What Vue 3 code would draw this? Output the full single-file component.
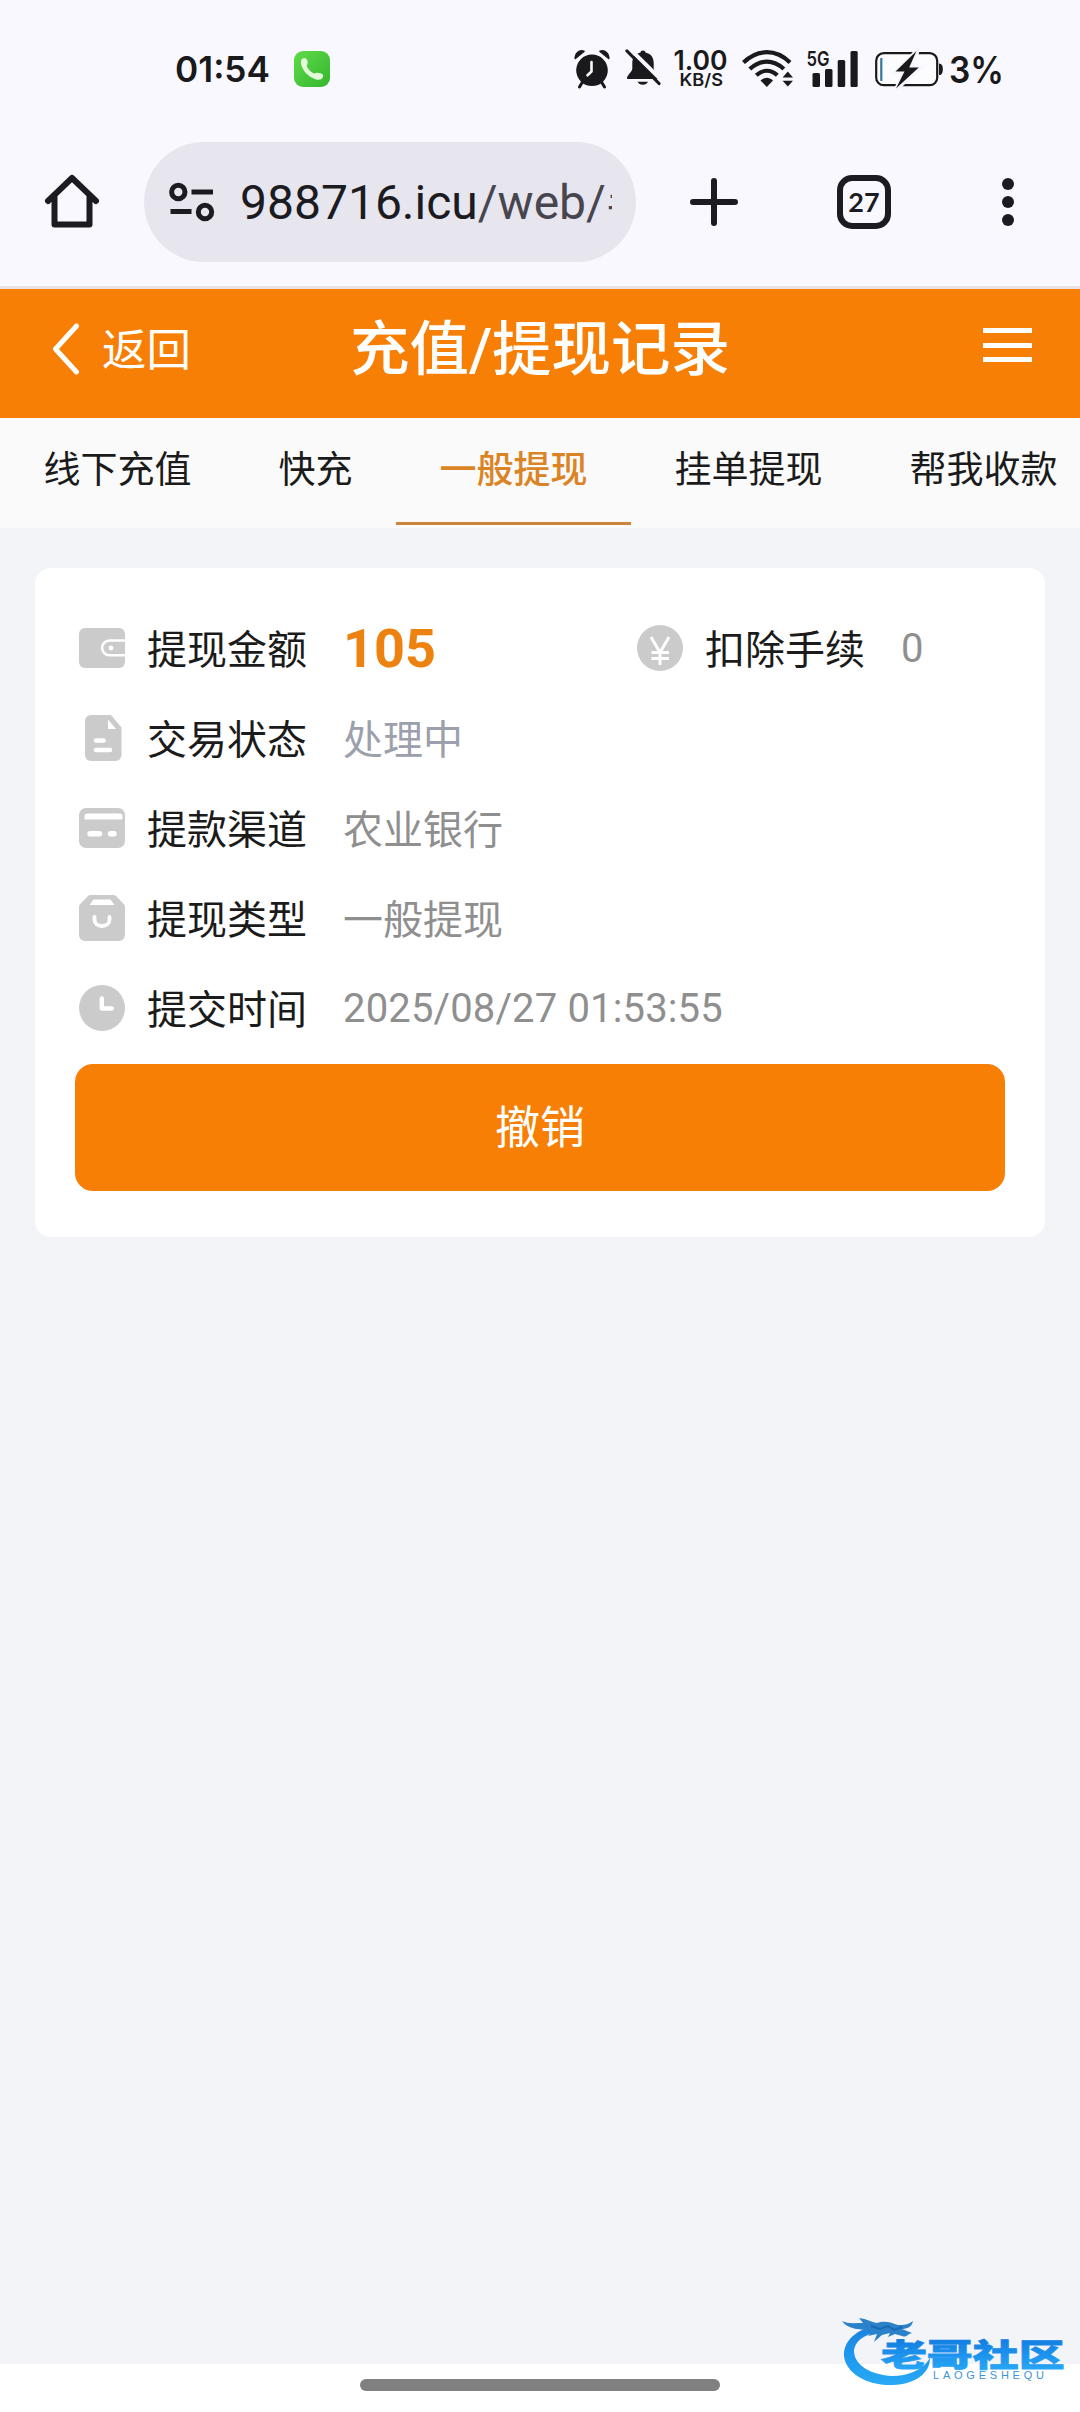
<script setup>
import { ref } from "vue";

const tabs = ["线下充值", "快充", "一般提现", "挂单提现", "帮我收款"];
const activeTab = ref(2);

const amount = { label: "提现金额", value: "105" };
const fee = { label: "扣除手续", value: "0" };

const rows = [
  { icon: "doc", label: "交易状态", value: "处理中", pending: true },
  { icon: "card", label: "提款渠道", value: "农业银行" },
  { icon: "bag", label: "提现类型", value: "一般提现" },
  { icon: "clock", label: "提交时间", value: "2025/08/27 01:53:55" },
];
</script>

<template>
  <div class="screen">
    <div class="status-bar">
      <svg class="status-time" width="96" height="56" viewBox="0 -8 96 56">
        <text x="0" y="33" textLength="95" lengthAdjust="spacingAndGlyphs">01:54</text>
      </svg>
      <svg class="status-call" width="36" height="36" viewBox="0 0 36 36">
        <defs>
          <linearGradient id="callBg" x1="0" y1="0" x2="1" y2="1">
            <stop offset="0" stop-color="#5fdc4a" />
            <stop offset="1" stop-color="#35b52f" />
          </linearGradient>
        </defs>
        <rect width="36" height="36" rx="9" fill="url(#callBg)" />
        <path d="M8 8c1.300-1.300 3.500-1.300 4.600.3 1.200 1.800 1.500 3.500.6 5.200-.4.800-.6 1.400-.2 2.200 1.400 2.900 3.600 5 6.500 6.500.8.400 1.500.1 2.300-.2 2.500-.7 5 .2 7 1.600.6.500.4 2.600-.8 4-1.300 1.300-3.800 1.400-6 .8C14.500 26 8.600 20.300 7 12.800 6.700 11 6.900 9.200 8 8z" fill="#e3fbd9" />
      </svg>

      <div class="status-icons">
        <svg width="38" height="40" viewBox="0 0 38 40">
          <path d="M2.300 9.500C1.500 5 6 .3 11 2.300z" fill="#1a1a1c" stroke="#1a1a1c" stroke-width="1.500" stroke-linejoin="round" />
          <path d="M35.700 9.500C36.500 5 32 .3 27 2.300z" fill="#1a1a1c" stroke="#1a1a1c" stroke-width="1.500" stroke-linejoin="round" />
          <circle cx="19" cy="21.300" r="15.800" fill="#1a1a1c" />
          <path d="M9.500 33l-3 5M28.500 33l3 5" stroke="#1a1a1c" stroke-width="3" stroke-linecap="round" />
          <path d="M18.500 13v9.500l-4 3.800" fill="none" stroke="#f8f7fe" stroke-width="2.600" stroke-linecap="round" stroke-linejoin="round" />
        </svg>
        <svg class="bell" width="36" height="40" viewBox="0 0 36 40">
          <path d="M18 1.600c-1.400 0-2.400.8-2.500 2C9.500 5 7.500 9 7.300 14v5.500c0 3-4.600 6.200-5.300 9.200-.2.900.3 1.300 1.200 1.300h29.600c.9 0 1.400-.4 1.200-1.300-.7-3-5.300-6.200-5.300-9.200V14C28.500 9 26.500 5 20.500 3.600c-.1-1.200-1.100-2-2.500-2z" fill="#1a1a1c" />
          <path d="M12.500 32.800h10.500c-1 2-2.800 3-5.200 3s-4.300-1-5.300-3z" fill="#1a1a1c" />
          <path d="M4.500-.5L36.500 31" stroke="#f8f7fe" stroke-width="4" />
          <path d="M2 2l32 32.500" stroke="#1a1a1c" stroke-width="3.200" stroke-linecap="round" />
        </svg>
        <svg class="speed" width="56" height="56" viewBox="0 -8 56 56">
          <text x="0.500" y="21" font-size="26.500" textLength="54" lengthAdjust="spacingAndGlyphs">1.00</text>
          <text x="6.500" y="37" font-size="17" textLength="43.500" lengthAdjust="spacingAndGlyphs">KB/S</text>
        </svg>
        <svg class="wifi" width="52" height="40" viewBox="0 0 52 40">
          <g fill="none" stroke="#1a1a1c" stroke-width="4.200">
            <path d="M1.500 13.500C15.500-.3 34-.3 48 13.500" />
            <path d="M7.800 20c10.500-9.800 23.600-9.800 34 0" />
            <path d="M14.300 26.300c6.500-6 14.500-6 21 0" />
          </g>
          <path d="M18.500 31.500c4-3.600 8.500-3.600 12.500 0L24.800 38z" fill="#1a1a1c" />
          <path d="M45.800 22.600l5.200 5.900H40.600zM45.800 37.600l5.200-5.900H40.600z" fill="#1a1a1c" />
        </svg>
        <svg class="signal" width="52" height="56" viewBox="0 -8 52 56">
          <text x="0.500" y="17" font-size="20.500" textLength="23" lengthAdjust="spacingAndGlyphs">5G</text>
          <rect x="6.500" y="24" width="7.500" height="14" rx="1.500" fill="#1a1a1c" />
          <rect x="19" y="20" width="7.500" height="18" rx="1.500" fill="#1a1a1c" />
          <rect x="31.700" y="11" width="7.500" height="27" rx="1.500" fill="#1a1a1c" />
          <rect x="44.500" y="2" width="7.200" height="36" rx="1.500" fill="#1a1a1c" />
        </svg>
        <svg class="battery" width="68" height="40" viewBox="0 0 68 40">
          <rect x="1.200" y="4.200" width="61" height="32" rx="7.500" fill="#fcfcff" stroke="#1a1a1c" stroke-width="2.200" />
          <path d="M8 8.500c-1.800.3-3 1.800-3 4v15.500c0 2.200 1.200 3.700 3 4z" fill="#a9dcee" />
          <path d="M6.200 9v23" stroke="#3b6f94" stroke-width="1.800" />
          <path d="M64 14.500c2.700.3 3.800 1.800 3.800 5.700s-1.100 5.600-3.800 5.900z" fill="#1a1a1c" />
          <path d="M42 2.500L20.500 23h9.500l-8 16L44.500 18.600h-9.300z" fill="#1a1a1c" stroke="#f8f7fe" stroke-width="5" />
          <path d="M41.500 2L20.500 22.500h9l-8.500 17L43.800 18.500h-9.600z" fill="#1a1a1c" />
        </svg>
        <svg class="percent" width="56" height="56" viewBox="0 -8 56 56">
          <text x="0" y="33.500" font-size="36.500" textLength="55" lengthAdjust="spacingAndGlyphs">3%</text>
        </svg>
      </div>
    </div>

    <div class="browser-bar">
      <svg class="home-icon" width="56" height="56" viewBox="0 0 56 56">
        <path d="M4 27L28 4l24 23M10.500 22v28.500h35V22" fill="none" stroke="#1b1b21" stroke-width="6" stroke-linecap="round" stroke-linejoin="round" />
      </svg>
      <div class="url-pill">
        <svg width="46" height="40" viewBox="0 0 46 40">
          <g fill="none" stroke="#1b1b21" stroke-width="5">
            <circle cx="9.300" cy="10" r="6.700" />
            <circle cx="36" cy="30" r="6.700" />
            <path d="M22.500 10H44M1.500 29.500H22.500" />
          </g>
        </svg>
        <div class="url"><span class="domain">988716.icu</span>/web/<span class="url-cut">#</span></div>
      </div>
      <svg class="plus-icon" width="48" height="48" viewBox="0 0 48 48">
        <path d="M24 3v42M3 24h42" stroke="#1b1b21" stroke-width="6" stroke-linecap="round" />
      </svg>
      <div class="tab-count">27</div>
      <svg class="dots-icon" width="12" height="48" viewBox="0 0 12 48">
        <circle cx="6" cy="6" r="6" fill="#1b1b21" />
        <circle cx="6" cy="24" r="6" fill="#1b1b21" />
        <circle cx="6" cy="42" r="6" fill="#1b1b21" />
      </svg>
    </div>

    <header class="page-header">
      <div class="back">
        <svg width="28" height="52" viewBox="0 0 28 52">
          <path d="M24.500 3L3.500 26l21 23" fill="none" stroke="#fff" stroke-width="5" stroke-linecap="round" stroke-linejoin="round" />
        </svg>
        <span>返回</span>
      </div>
      <h1>充值/提现记录</h1>
      <div class="menu"><i></i><i></i><i></i></div>
    </header>

    <nav class="tabs">
      <div
        v-for="(tab, index) in tabs"
        :key="tab"
        class="tab"
        :class="{ active: index === activeTab }"
        @click="activeTab = index"
      >
        {{ tab }}
      </div>
    </nav>

    <main class="content">
      <section class="card">
        <div class="row">
          <div class="cell cell-amount">
            <svg class="icon" viewBox="0 0 46 46">
              <rect y="3" width="46" height="40" rx="6" fill="#cbcbcb" />
              <path d="M46 15.500H30.500a7.300 7.300 0 0 0 0 14.800H46" fill="none" stroke="#fff" stroke-width="2.600" />
              <circle cx="32" cy="23" r="2.400" fill="#fff" />
            </svg>
            <span class="label">{{ amount.label }}</span>
            <span class="value amount">{{ amount.value }}</span>
          </div>
          <div class="cell">
            <svg class="icon" viewBox="0 0 46 46">
              <circle cx="23" cy="23" r="23" fill="#cbcbcb" />
              <path d="M14 12l9 15.500L32 12M23 27v13M14.500 27.500h17.500M14.500 33.500h17.500" fill="none" stroke="#fff" stroke-width="3" />
            </svg>
            <span class="label">{{ fee.label }}</span>
            <span class="value number">{{ fee.value }}</span>
          </div>
        </div>

        <div v-for="row in rows" :key="row.icon" class="row">
          <svg v-if="row.icon === 'doc'" class="icon" viewBox="0 0 46 46">
            <path d="M12 0h20l10.500 12.500V40a6 6 0 0 1-6 6H12a6 6 0 0 1-6-6V6a6 6 0 0 1 6-6z" fill="#cbcbcb" />
            <path d="M29 4.500v9.500h8z" fill="#fff" />
            <path d="M17 25.500h7.500M17 35h14" stroke="#fff" stroke-width="4.600" stroke-linecap="round" />
          </svg>
          <svg v-else-if="row.icon === 'card'" class="icon" viewBox="0 0 46 46">
            <rect y="3" width="46" height="40" rx="7" fill="#cbcbcb" />
            <path d="M5.500 14.500V11.500a3 3 0 0 1 3-3h32a3 3 0 0 1 3 3v3z" fill="#fff" />
            <path d="M11 28.800h9.500M31.500 28.800h3.500" stroke="#fff" stroke-width="5.400" stroke-linecap="round" />
          </svg>
          <svg v-else-if="row.icon === 'bag'" class="icon" viewBox="0 0 46 46">
            <path d="M12 0h22c1.500 0 2.500.5 3.500 1.500l6.800 7C45.500 9.700 46 11 46 12.500V40a6 6 0 0 1-6 6H6a6 6 0 0 1-6-6V12.500C0 11 .5 9.700 1.700 8.500l6.800-7C9.500.5 10.500 0 12 0z" fill="#cbcbcb" />
            <path d="M14.500 4.500h17L35.500 10h-25z" fill="#fff" />
            <path d="M15.500 22v2.500c0 4.200 3.300 6.500 7.500 6.500s7.500-2.300 7.500-6.500V22" fill="none" stroke="#fff" stroke-width="3.800" stroke-linecap="round" />
          </svg>
          <svg v-else class="icon" viewBox="0 0 46 46">
            <circle cx="23" cy="23" r="23" fill="#cbcbcb" />
            <path d="M22.800 13.500v10h10" fill="none" stroke="#fff" stroke-width="4.400" stroke-linecap="round" stroke-linejoin="round" />
          </svg>
          <span class="label">{{ row.label }}</span>
          <span class="value" :class="{ pending: row.pending, number: row.icon === 'clock' }">{{ row.value }}</span>
        </div>

        <button class="cancel-button">撤销</button>
      </section>
    </main>

    <footer class="gesture-bar"><div class="gesture-pill"></div></footer>

    <svg class="watermark" width="236" height="84" viewBox="0 0 236 84">
      <defs>
        <linearGradient id="wmText" x1="0" y1="0" x2="0" y2="1">
          <stop offset="0.150" stop-color="#0f7be0" />
          <stop offset="0.900" stop-color="#27a6f6" />
        </linearGradient>
        <linearGradient id="wmRing" x1="0" y1="0" x2="0" y2="1">
          <stop offset="0" stop-color="#1c7fd8" />
          <stop offset="0.500" stop-color="#1d97ee" />
          <stop offset="1" stop-color="#28a9f5" />
        </linearGradient>
      </defs>
      <path d="M46 10C20 12 3 25 4 42c2 18 24 30 49 29 23-1 37-12 37-27-7 12-22 18-38 18-20-1-37-10-38-24C14 26 28 17 50 17z" fill="url(#wmRing)" />
      <path d="M2 7c6 3 12 2 21 2l-4-5c8 1 12 4 18 5 8-3 15 0 21 2 6 0 10 0 15-4-1 6-6 8-11 8l10 4c-5 1-5 5-10 3l-7-2-7 3 2-4-8 2-8 7 3-8-9 2 5-5C20 15 8 16 2 7z" fill="#2b82c9" />
      <path d="M31 12l9 3 8-3 6 4 8-3" fill="none" stroke="#1769b3" stroke-width="2" />
      <g transform="translate(41 51.500) scale(1.480 1)">
        <text class="wm-name" x="0" y="0" textLength="124" fill="url(#wmText)" stroke="url(#wmText)">老哥社区</text>
      </g>
      <text class="wm-latin" x="93" y="64.500" textLength="111">LAOGESHEQU</text>
    </svg>
  </div>
</template>

<style>
body {
  margin: 0;
  background: #f3f4f8;
}
</style>

<style scoped>
.screen {
  position: relative;
  display: flex;
  flex-direction: column;
  width: 1080px;
  height: 2412px;
  overflow: hidden;
  background: #f3f4f8;
  color: #1b1b1b;
  font-family: Roboto, "Noto Sans CJK SC", sans-serif;
}

svg {
  display: block;
  flex: none;
}

.status-bar {
  display: flex;
  align-items: center;
  box-sizing: border-box;
  height: 140px;
  padding: 0 75px 2px 175px;
  background: #f9f8fe;
}

.status-bar text {
  font-family: Inter, sans-serif;
  font-weight: 600;
  fill: #1a1a1c;
}

.status-time text {
  font-size: 36px;
}

.status-call {
  margin-left: 23px;
}

.status-icons {
  display: flex;
  align-items: center;
  margin-left: auto;
}

.bell {
  margin-left: 14px;
}

.speed {
  margin-left: 12px;
}

.wifi {
  margin-left: 13px;
}

.signal {
  margin-left: 12px;
}

.battery {
  margin-left: 17px;
}

.percent {
  margin-left: 6px;
}

.browser-bar {
  display: flex;
  align-items: center;
  box-sizing: border-box;
  height: 149px;
  padding: 0 66px 23px 44px;
  background: #f9f8fe;
  border-bottom: 3px solid #eae2e2;
}

.url-pill {
  display: flex;
  align-items: center;
  box-sizing: border-box;
  width: 492px;
  height: 120px;
  margin-left: 44px;
  padding: 0 23px 0 25px;
  border-radius: 60px;
  background: #e7e5ee;
}

.url {
  display: flex;
  width: 374px;
  margin-left: 25px;
  padding-top: 3px;
  overflow: hidden;
  white-space: nowrap;
  font-size: 48px;
  line-height: 60px;
  color: #47464f;
}

.domain {
  color: #1b1b21;
}

.url-cut {
  width: 6px;
  overflow: hidden;
}

.plus-icon {
  margin-left: 54px;
}

.tab-count {
  box-sizing: border-box;
  width: 54px;
  height: 54px;
  margin-left: 99px;
  border: 6px solid #1b1b21;
  border-radius: 15px;
  font-family: Lato, sans-serif;
  font-size: 27px;
  font-weight: 700;
  line-height: 42px;
  text-align: center;
  color: #1b1b21;
}

.dots-icon {
  margin-left: auto;
}

.page-header {
  display: grid;
  grid-template-columns: 1fr auto 1fr;
  align-items: center;
  box-sizing: border-box;
  height: 129px;
  padding: 0 48px 9px 48px;
  background: #f77f05;
  color: #fff;
}

.back {
  display: flex;
  align-items: center;
  gap: 22px;
  padding-left: 4px;
  font-size: 44.500px;
}

.back span {
  padding-bottom: 6px;
}

.page-header h1 {
  margin: 0;
  padding-top: 2px;
  font-size: 59.500px;
  font-weight: 500;
  line-height: 80px;
}

.menu {
  display: flex;
  flex-direction: column;
  justify-self: end;
  gap: 9.500px;
  width: 49px;
  padding-bottom: 8px;
}

.menu i {
  height: 5px;
  background: #fff;
}

.tabs {
  display: flex;
  height: 110px;
  overflow: hidden;
  background: #fafafa;
}

.tab {
  flex: none;
  box-sizing: border-box;
  height: 107px;
  padding: 0 43.500px;
  border-bottom: 3px solid transparent;
  font-size: 37px;
  line-height: 106px;
  white-space: nowrap;
}

.tab.active {
  border-bottom-color: #cf8538;
  color: #db8425;
  font-weight: 500;
}

.content {
  flex: 1;
  padding: 40px 35px 0;
}

.card {
  box-sizing: border-box;
  height: 669px;
  padding: 35px 40px 0;
  border-radius: 16px;
  background: #fff;
}

.row,
.cell {
  display: flex;
  align-items: center;
  height: 90px;
}

.row {
  padding-left: 4px;
}

.cell-amount {
  width: 558px;
}

.icon {
  width: 46px;
  height: 46px;
}

.label {
  width: 160px;
  margin-left: 22px;
  padding-bottom: 3px;
  font-size: 40px;
}

.value {
  margin-left: 36px;
  padding-bottom: 3px;
  font-size: 40px;
  color: #8f8f8f;
}

.value.number {
  padding: 1px 0 0;
  letter-spacing: 0.150px;
}

.value.pending {
  color: #9ca0ac;
}

.value.amount {
  padding: 1px 0 0;
  font-size: 54px;
  font-weight: 700;
  color: #ee8210;
}

.cancel-button {
  display: block;
  width: 930px;
  height: 127px;
  margin-top: 11px;
  padding: 0 0 7px;
  border: none;
  border-radius: 18px;
  background: #f77f05;
  color: #fff;
  font-family: inherit;
  font-size: 45px;
}

.gesture-bar {
  display: flex;
  justify-content: center;
  box-sizing: border-box;
  height: 48px;
  padding-top: 15px;
  background: #fff;
}

.gesture-pill {
  width: 360px;
  height: 12px;
  border-radius: 6px;
  background: #808080;
}

/* community logo laid over the page corner */
.watermark {
  position: absolute;
  right: 4px;
  bottom: 14px;
}

.wm-name {
  font-family: "Noto Sans CJK SC", sans-serif;
  font-size: 31px;
  font-weight: 900;
  stroke-width: 0.800px;
}

.wm-latin {
  font-family: "Liberation Sans", sans-serif;
  font-size: 11px;
  fill: #3c93dc;
}
</style>
